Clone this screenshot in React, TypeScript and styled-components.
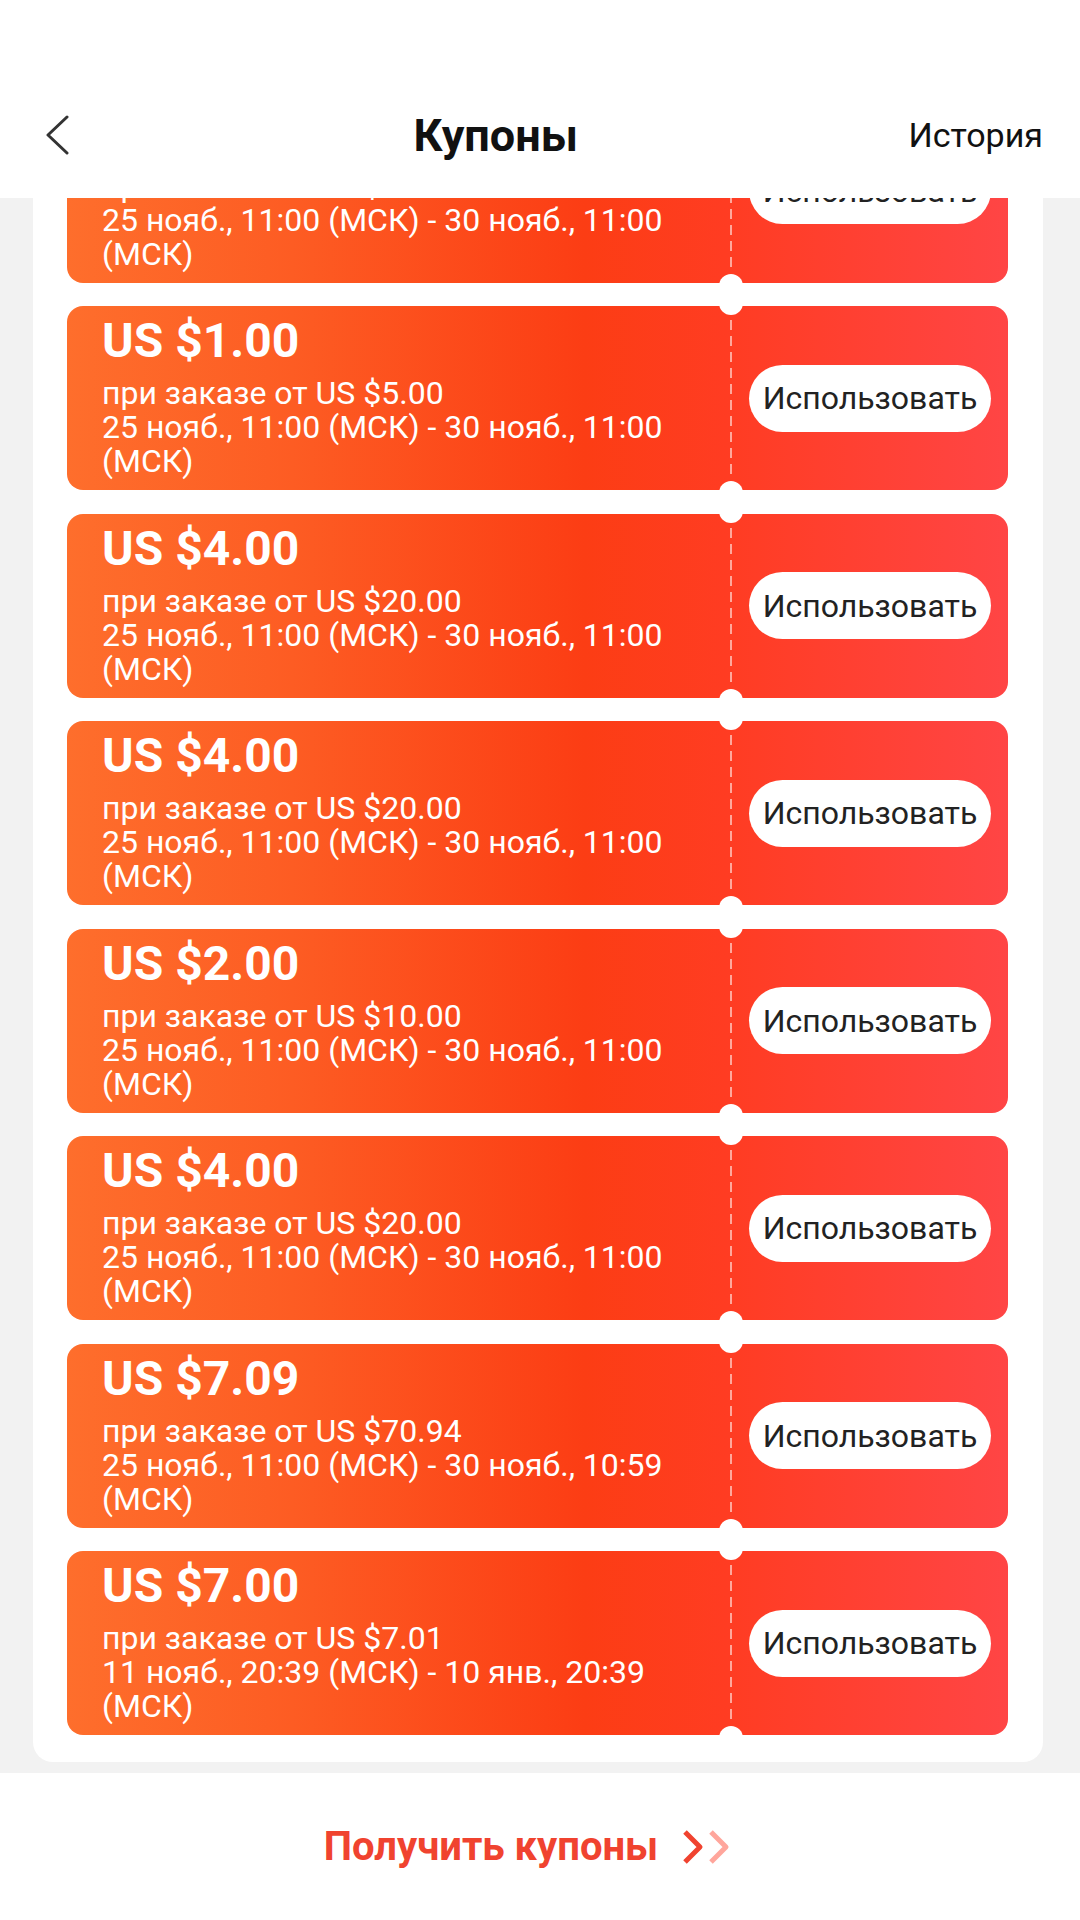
import { styled, createGlobalStyle } from 'styled-components';

const GlobalStyle = createGlobalStyle`
  html, body {
    margin: 0;
    padding: 0;
    background: #ffffff;
  }
  body {
    font-family: Roboto, "Noto Sans", "Liberation Sans", sans-serif;
  }
  * {
    box-sizing: border-box;
  }
`;

type Coupon = {
  amount: string;
  minOrder: string;
  period: string;
};

const coupons: Coupon[] = [
  { amount: 'US $2.00', minOrder: 'US $10.00', period: '25 нояб., 11:00 (МСК) - 30 нояб., 11:00 (МСК)' },
  { amount: 'US $1.00', minOrder: 'US $5.00', period: '25 нояб., 11:00 (МСК) - 30 нояб., 11:00 (МСК)' },
  { amount: 'US $4.00', minOrder: 'US $20.00', period: '25 нояб., 11:00 (МСК) - 30 нояб., 11:00 (МСК)' },
  { amount: 'US $4.00', minOrder: 'US $20.00', period: '25 нояб., 11:00 (МСК) - 30 нояб., 11:00 (МСК)' },
  { amount: 'US $2.00', minOrder: 'US $10.00', period: '25 нояб., 11:00 (МСК) - 30 нояб., 11:00 (МСК)' },
  { amount: 'US $4.00', minOrder: 'US $20.00', period: '25 нояб., 11:00 (МСК) - 30 нояб., 11:00 (МСК)' },
  { amount: 'US $7.09', minOrder: 'US $70.94', period: '25 нояб., 11:00 (МСК) - 30 нояб., 10:59 (МСК)' },
  { amount: 'US $7.00', minOrder: 'US $7.01', period: '11 нояб., 20:39 (МСК) - 10 янв., 20:39 (МСК)' },
];

function CouponsPage() {
  return (
    <Page>
      <GlobalStyle />
      <Header>
        <HeaderRow>
          <BackButton aria-label="Назад">
            <svg width="24" height="40" viewBox="0 0 24 40">
              <polyline
                points="22,2 3,20 22,38"
                fill="none"
                stroke="#333333"
                strokeWidth="3"
                strokeLinecap="round"
                strokeLinejoin="round"
              />
            </svg>
          </BackButton>
          <Title>Купоны</Title>
          <HistoryLink>История</HistoryLink>
        </HeaderRow>
      </Header>

      <ScrollArea>
        <Panel>
          {coupons.map((c, i) => (
            <CouponCard key={i}>
              <CouponMain>
                <Amount>{c.amount}</Amount>
                <Terms>при заказе от {c.minOrder}</Terms>
                <Terms>{c.period}</Terms>
              </CouponMain>
              <Perforation />
              <CouponSide>
                <UseButton>Использовать</UseButton>
              </CouponSide>
            </CouponCard>
          ))}
        </Panel>
      </ScrollArea>

      <Footer>
        <GetCoupons>Получить купоны</GetCoupons>
        <svg width="48" height="36" viewBox="0 0 48 36">
          <polyline
            points="3,3 18,18 3,33"
            fill="none"
            stroke="#f0432f"
            strokeWidth="5"
            strokeLinejoin="round"
          />
          <polyline
            points="29,3 44,18 29,33"
            fill="none"
            stroke="#ffa69c"
            strokeWidth="5"
            strokeLinejoin="round"
          />
        </svg>
      </Footer>
    </Page>
  );
}

export default CouponsPage;

const Page = styled.div`
  display: flex;
  flex-direction: column;
  width: 1080px;
  height: 1920px;
  overflow: hidden;
  background: #f2f2f2;
`;

const Header = styled.header`
  flex-shrink: 0;
  height: 198px;
  padding-top: 72px;
  background: #ffffff;
`;

const HeaderRow = styled.div`
  display: flex;
  align-items: center;
  height: 126px;
  padding: 0 37px 0 45px;
`;

const BackButton = styled.button`
  display: flex;
  align-items: center;
  width: 38px;
  height: 60px;
  padding: 0;
  border: none;
  background: none;
`;

const Title = styled.h1`
  flex: 1;
  margin: 0;
  text-align: center;
  font-size: 45px;
  font-weight: 700;
  color: #111111;
`;

const HistoryLink = styled.span`
  font-size: 34px;
  color: #111111;
`;

// список прокручен: первый купон уходит под шапку
const ScrollArea = styled.main`
  flex: 1;
  overflow: hidden;
`;

const Panel = styled.section`
  display: flex;
  flex-direction: column;
  gap: 23.5px;
  margin: -123.5px 37px 0 33px;
  padding: 24px 35px 27px 34px;
  border-radius: 20px;
  background: #ffffff;
`;

const CouponCard = styled.div`
  position: relative;
  display: flex;
  height: 184px;
  border-radius: 16px;
  background: linear-gradient(
    90deg,
    #fe6e2c 0%,
    #fd5c23 24%,
    #fc3d14 55%,
    #ff3c22 70%,
    #ff4545 100%
  );
`;

const CouponMain = styled.div`
  flex: 1;
  padding: 7px 28px 0 35px;
  color: #ffffff;
`;

const Amount = styled.div`
  margin-bottom: 7px;
  font-size: 48px;
  font-weight: 700;
  line-height: 56px;
`;

const Terms = styled.div`
  font-size: 32px;
  line-height: 34px;
`;

const Perforation = styled.div`
  position: relative;
  flex-shrink: 0;
  width: 2px;
  padding: 14px 0;
  background: repeating-linear-gradient(
      to bottom,
      rgba(255, 255, 255, 0.55) 0 10px,
      transparent 10px 16px
    )
    content-box;

  &::before,
  &::after {
    content: '';
    position: absolute;
    left: 50%;
    width: 24px;
    height: 24px;
    margin-left: -12px;
    border-radius: 50%;
    background: #ffffff;
  }

  &::before {
    top: -15px;
  }

  &::after {
    bottom: -15px;
  }
`;

const CouponSide = styled.div`
  display: flex;
  align-items: center;
  justify-content: center;
  width: 276px;
`;

const UseButton = styled.button`
  height: 67px;
  padding: 0 14px;
  border: none;
  border-radius: 34px;
  background: #ffffff;
  color: #222222;
  font-family: Roboto, "Noto Sans", "Liberation Sans", sans-serif;
  font-size: 32px;
`;

const Footer = styled.footer`
  display: flex;
  flex-shrink: 0;
  align-items: center;
  justify-content: center;
  gap: 24px;
  height: 147px;
  padding-right: 26px;
  background: #ffffff;
`;

const GetCoupons = styled.span`
  font-size: 40px;
  font-weight: 700;
  color: #f0432f;
`;
